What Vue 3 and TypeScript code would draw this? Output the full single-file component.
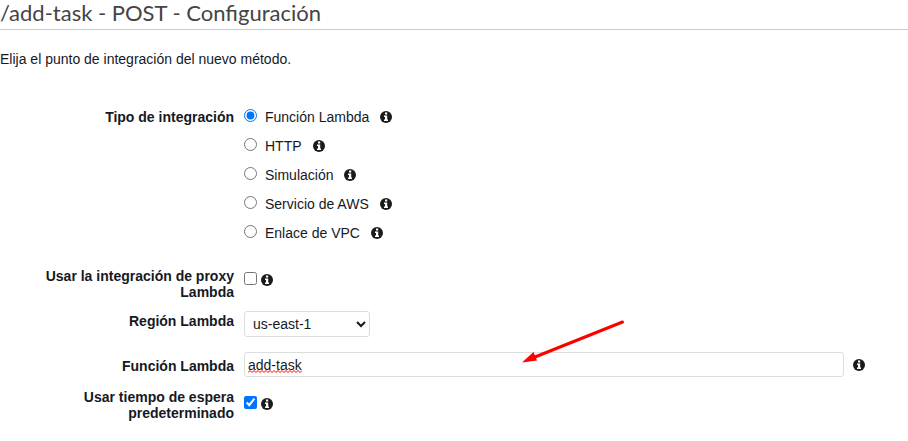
<script setup lang="ts">
import { defineComponent, h, ref } from 'vue'

interface IntegrationType {
  value: string
  label: string
}

const integrationTypes: IntegrationType[] = [
  { value: 'lambda', label: 'Función Lambda' },
  { value: 'http', label: 'HTTP' },
  { value: 'mock', label: 'Simulación' },
  { value: 'aws', label: 'Servicio de AWS' },
  { value: 'vpc', label: 'Enlace de VPC' },
]

const integration = ref('lambda')
const useProxy = ref(false)
const region = ref('us-east-1')
const functionName = ref('add-task')
const useDefaultTimeout = ref(true)

const InfoIcon = defineComponent({
  render: () =>
    h('svg', { width: 12, height: 12, viewBox: '0 0 12 12', 'aria-hidden': 'true' }, [
      h('circle', { cx: 6, cy: 6, r: 6, fill: '#1b1b1b' }),
      h('path', { d: 'M5 1.5h2.2v2H5zM4 4.5h3.2v4H8V10H4V8.5h1V6H4z', fill: '#fff' }),
    ]),
})

// Spell-check squiggle: 27 alternating 2px strokes across the word.
const squiggle =
  'M0 2.5' + Array.from({ length: 27 }, (_, i) => `l2 ${i % 2 ? 2 : -2}`).join('')
</script>

<template>
  <main class="page">
    <h1 class="title">/add-task - POST - Configuración</h1>
    <p class="intro">Elija el punto de integración del nuevo método.</p>

    <form class="form" @submit.prevent>
      <div class="row row-types" role="radiogroup" aria-labelledby="type-label">
        <span id="type-label" class="label">Tipo de integración</span>
        <div class="options">
          <div v-for="item in integrationTypes" :key="item.value" class="option">
            <input :id="item.value" v-model="integration" class="tick" type="radio" name="integration" :value="item.value" />
            <label :for="item.value">{{ item.label }}</label>
            <InfoIcon class="info" />
          </div>
        </div>
      </div>

      <div class="row">
        <label class="label" for="proxy">Usar la integración de proxy Lambda</label>
        <div class="check">
          <input id="proxy" v-model="useProxy" class="tick" type="checkbox" />
          <InfoIcon class="info" />
        </div>
      </div>

      <div class="row row-region">
        <label class="label" for="region">Región Lambda</label>
        <div class="field">
          <select id="region" v-model="region" class="control select">
            <option>us-east-1</option>
          </select>
        </div>
      </div>

      <div class="row row-function">
        <label class="label" for="function">Función Lambda</label>
        <div class="field">
          <input id="function" v-model="functionName" class="control text" type="text" spellcheck="false" />
          <InfoIcon class="info" />
          <svg v-if="functionName === 'add-task'" class="squiggle" width="54" height="3" viewBox="0 0 54 3" aria-hidden="true">
            <path :d="squiggle" stroke="#f00" />
          </svg>
          <svg class="arrow" width="104" height="46" viewBox="0 0 104 46" aria-hidden="true">
            <path d="M100.5 4L13 39" stroke="#f00" stroke-width="3" stroke-linecap="round" />
            <path d="M0 44.5L11.5 34L15 42.5Z" fill="#f00" />
          </svg>
        </div>
      </div>

      <div class="row row-timeout">
        <label class="label" for="timeout">Usar tiempo de espera predeterminado</label>
        <div class="check">
          <input id="timeout" v-model="useDefaultTimeout" class="tick" type="checkbox" />
          <InfoIcon class="info" />
        </div>
      </div>
    </form>
  </main>
</template>

<style>
body {
  margin: 0;
  background: #fff;
}
</style>

<style scoped>
.page {
  color: #16191f;
  font: 14px/16px "Liberation Sans", Arial, sans-serif;
}

.title {
  margin: 0;
  padding-bottom: 4px;
  border-bottom: 1px solid #ccc;
  color: #444;
  font: 400 22px/25px Lato, sans-serif;
}

.intro {
  margin: 21px 0 36px;
}

.row {
  display: grid;
  grid-template-columns: 234px minmax(0, 1fr);
  column-gap: 10px;
  align-items: start;
  margin-bottom: 11px;
}

.row-types {
  margin-bottom: 20px;
}

.row-region {
  margin-bottom: 15px;
}

.row-function {
  margin-bottom: 12px;
}

.label {
  padding-left: 40px;
  font-weight: 700;
  text-align: right;
}

.row-types .label,
.row-function .label {
  padding-top: 6px;
}

.row-region .label {
  padding-top: 2px;
}

.option {
  display: flex;
  box-sizing: border-box;
  align-items: center;
  height: 29px;
  padding-bottom: 2px;
}

.tick {
  flex: none;
  width: 13px;
  height: 13px;
  margin: 0;
}

.option .tick {
  margin: 0 8px 2px 0;
}

.option .info {
  margin-left: 11px;
}

.info {
  flex: none;
}

.check {
  display: flex;
  align-items: center;
  gap: 4px;
  padding-top: 3px;
}

.row-timeout .check {
  padding-top: 6px;
}

.check .info {
  margin-top: 3px;
}

.field {
  display: flex;
  position: relative;
  align-items: center;
  gap: 9px;
  padding-right: 43px;
}

.control {
  box-sizing: border-box;
  height: 26px;
  border: 1px solid #ddd;
  border-radius: 3px;
  background: #fff;
  color: #16191f;
  font: inherit;
}

.select {
  width: 126px;
  padding: 0 0 0 4px;
}

.text {
  flex: 1;
  min-width: 0;
  height: 25px;
  padding: 0 3px;
}

.squiggle {
  position: absolute;
  top: 18px;
  left: 4px;
  fill: none;
  pointer-events: none;
}

.arrow {
  position: absolute;
  top: -34px;
  left: 278px;
  fill: none;
  pointer-events: none;
}
</style>
